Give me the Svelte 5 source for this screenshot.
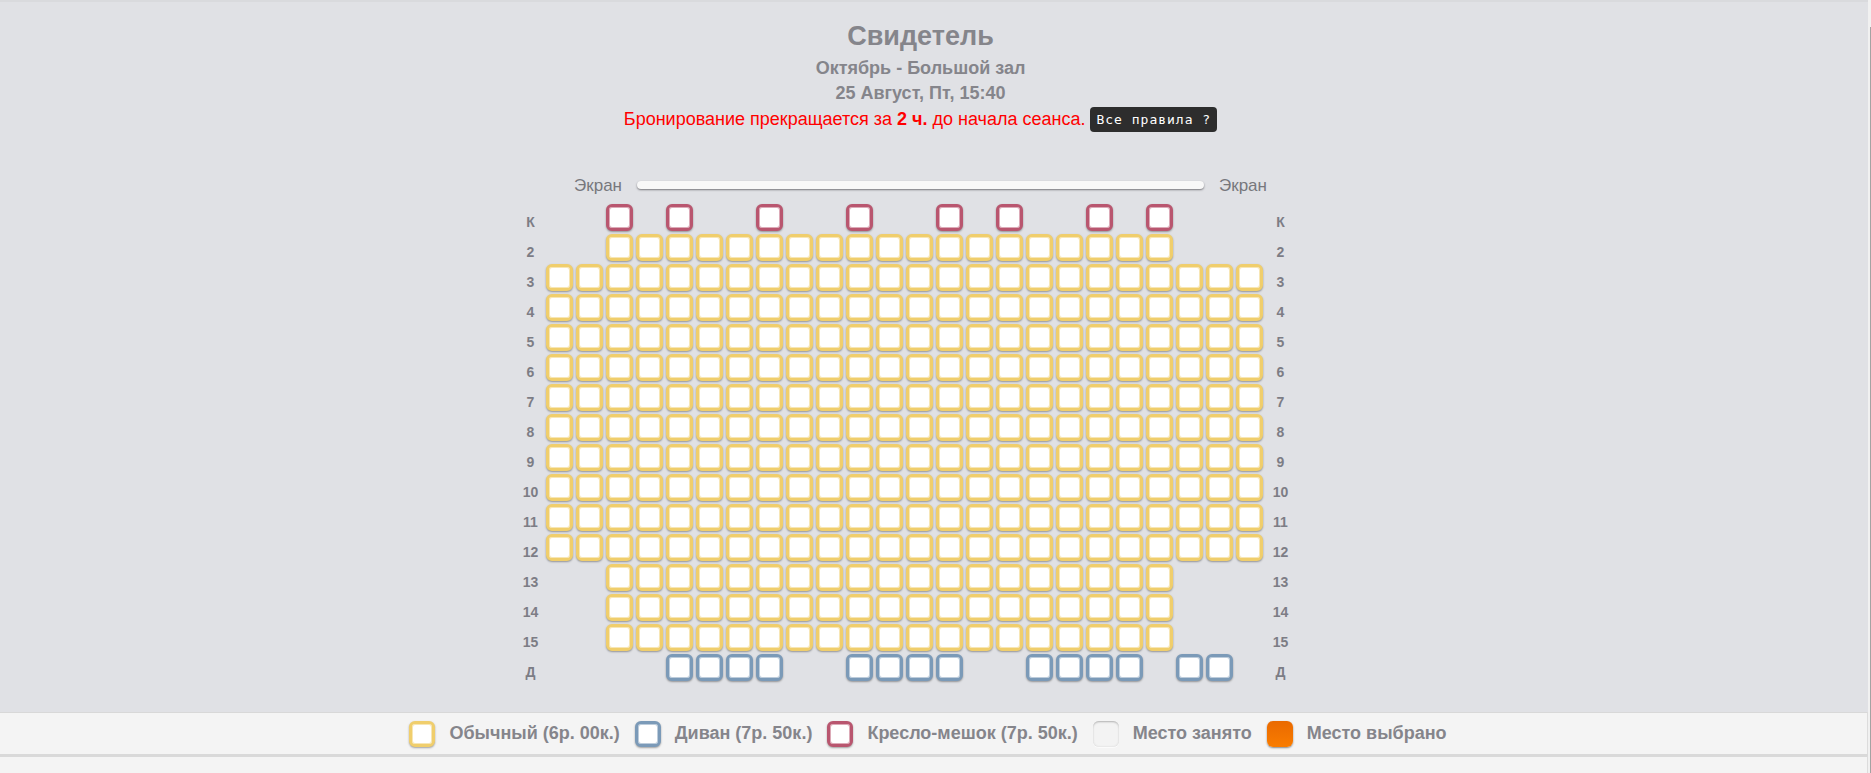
<script>
  const range = (from, to) => Array.from({ length: to - from + 1 }, (_, i) => from + i);

  const full = range(0, 23);
  const narrow = range(2, 20);

  const rows = [
    { label: "К", kind: "bag", seats: [2, 4, 7, 10, 13, 15, 18, 20] },
    { label: "2", kind: "common", seats: narrow },
    ...range(3, 12).map((n) => ({ label: String(n), kind: "common", seats: full })),
    ...range(13, 15).map((n) => ({ label: String(n), kind: "common", seats: narrow })),
    {
      label: "Д",
      kind: "sofa",
      seats: [...range(4, 7), ...range(10, 13), ...range(16, 19), 21, 22],
    },
  ];

  const legend = [
    { kind: "common", text: "Обычный (6р. 00к.)" },
    { kind: "sofa", text: "Диван (7р. 50к.)" },
    { kind: "bag", text: "Кресло-мешок (7р. 50к.)" },
    { kind: "taken", text: "Место занято" },
    { kind: "picked", text: "Место выбрано" },
  ];
</script>

<div class="page">
  <main class="hall">
    <header class="info">
      <h1>Свидетель</h1>
      <p class="sub">Октябрь - Большой зал</p>
      <p class="sub">25 Август, Пт, 15:40</p>
      <p class="warn">
        Бронирование прекращается за <b>2 ч.</b> до начала сеанса.
        <span class="rules">Все правила ?</span>
      </p>
    </header>

    <div class="screen">
      <span>Экран</span>
      <div class="bar"></div>
      <span>Экран</span>
    </div>

    <div class="plan">
      {#each rows as row}
        <div class="row">
          <span class="num">{row.label}</span>
          <div class="seats">
            {#each row.seats as col}
              <div class="seat {row.kind}" style="grid-column: {col + 1}"></div>
            {/each}
          </div>
          <span class="num">{row.label}</span>
        </div>
      {/each}
    </div>
  </main>

  <footer class="legend">
    {#each legend as item}
      <div class="seat {item.kind}"></div>
      <span class="caption">{item.text}</span>
    {/each}
  </footer>
  <div class="rest"></div>
  <div class="thumb"></div>
</div>

<style>
  :global(body) {
    margin: 0;
    background: #f1f1f1;
    overflow: hidden;
  }

  .page {
    position: relative;
    height: 773px;
    overflow: hidden;
    padding-right: 3px;
    font-family: "Liberation Sans", Arial, sans-serif;
    color: #85858b;
  }

  .hall {
    height: 712px;
    box-sizing: border-box;
    border-top: 2px solid #d9dadd;
    background: #e0e1e5;
    padding: 19px 27px 0 0;
  }

  .info {
    text-align: center;
  }

  h1 {
    margin: 0 0 5px;
    font-size: 27px;
    line-height: 30px;
    font-weight: bold;
  }

  .sub {
    margin: 0;
    font-size: 18px;
    line-height: 25px;
    font-weight: bold;
  }

  .warn {
    margin: 1px 0 0;
    color: #f00;
    font-size: 18px;
    line-height: 25px;
  }

  .rules {
    display: inline-block;
    height: 25px;
    line-height: 25px;
    padding: 0 6px;
    border-radius: 4px;
    background: #2d2d2d;
    color: #fff;
    font-family: "DejaVu Sans Mono", monospace;
    font-size: 13px;
    letter-spacing: 1px;
    vertical-align: top;
  }

  .screen {
    display: flex;
    justify-content: center;
    align-items: center;
    gap: 15px;
    height: 20px;
    margin-top: 43px;
    font-size: 17px;
    color: #77777c;
  }

  .screen span {
    padding-top: 2px;
  }

  .bar {
    width: 567px;
    height: 8px;
    border-radius: 5px;
    background: #f8f8f8;
    box-shadow: 0 1px 2px #77777c;
  }

  .plan {
    margin-top: 9px;
    padding-right: 30px;
  }

  .row {
    display: flex;
    justify-content: center;
    height: 30px;
  }

  .num {
    width: 30px;
    padding-top: 5px;
    box-sizing: border-box;
    font-size: 14px;
    font-weight: bold;
    line-height: 27px;
    text-align: center;
    color: #7d7d85;
  }

  .seats {
    display: grid;
    grid-template-columns: repeat(24, 30px);
    grid-template-rows: 30px;
    width: 720px;
  }

  .seat {
    box-sizing: border-box;
    width: 27px;
    height: 27px;
    border: 3px solid #ccc;
    border-radius: 6px;
    background: #fff;
  }

  .legend .seat {
    width: 26px;
    height: 26px;
  }

  .seat.common {
    border-color: #f0ce6c;
    box-shadow: inset 0 0 0 1px rgba(240, 206, 108, 0.5), 0 1px 2px rgba(0, 0, 0, 0.35);
  }

  .seat.sofa {
    border-color: #7b9ab8;
    box-shadow: inset 0 0 0 1px rgba(123, 154, 184, 0.5), 0 1px 2px rgba(0, 0, 0, 0.35);
  }

  .seat.bag {
    border-color: #b9566f;
    box-shadow: inset 0 0 0 1px rgba(185, 86, 111, 0.5), 0 1px 2px rgba(0, 0, 0, 0.35);
  }

  .seat.taken {
    border: 0;
    background: #f3f3f3;
    box-shadow: inset 0 2px 2px -1px #b5b5b5, inset 0 0 2px #cfcfcf, 0 1px 0 #fbfbfb;
  }

  .seat.picked {
    border: 0;
    background: linear-gradient(#ea6a00, #f97c00);
    box-shadow: 0 1px 2px rgba(0, 0, 0, 0.45);
  }

  .legend {
    display: flex;
    justify-content: center;
    align-items: center;
    height: 42px;
    box-sizing: border-box;
    padding-left: 4px;
    border-top: 1px solid #d8d8d8;
    border-right: 1px solid #dcdcdc;
    background: #f4f4f4;
  }

  .caption {
    margin: 0 15px 0 14px;
    font-size: 18px;
    font-weight: bold;
  }

  .rest {
    height: 19px;
    border-top: 3px solid #d9d9d9;
    border-right: 1px solid #dcdcdc;
    background: #f4f4f4;
  }

  .thumb {
    position: absolute;
    right: 0;
    top: 27px;
    bottom: 0;
    width: 1px;
    background: #a3a3a3;
  }
</style>
